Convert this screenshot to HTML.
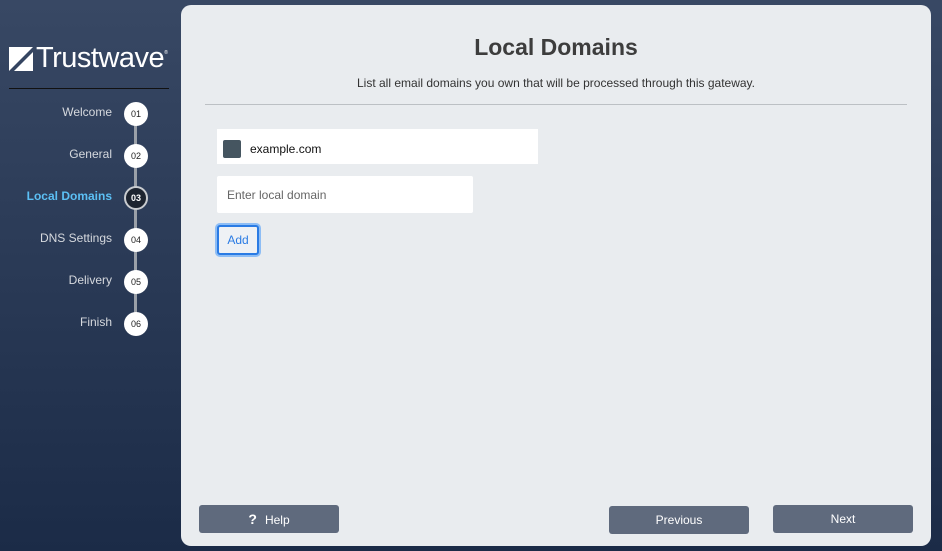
<!DOCTYPE html>
<html><head><meta charset="utf-8"><style>
*{box-sizing:border-box;margin:0;padding:0}
body{width:942px;height:551px;overflow:hidden;background:linear-gradient(#384864,#1b2b47);font-family:"Liberation Sans",sans-serif;position:relative}
.logo{position:absolute;left:9px;top:42px;color:#fff;font-size:29px;letter-spacing:-0.5px;display:flex;align-items:center}
.logo svg{margin-right:3px}
.hr{position:absolute;left:9px;top:88px;width:160px;height:1px;background:#111}
.line{position:absolute;left:134px;top:113px;width:3px;height:210px;background:#9aa0a8}
.step{position:absolute;left:0;width:150px;height:24px}
.step span{position:absolute;right:38px;top:3px;font-size:12px;color:#d6d9de;white-space:nowrap}
.step b{position:absolute;left:124px;top:0;width:24px;height:24px;border-radius:50%;background:#fff;color:#222;font-size:9px;font-weight:normal;text-align:center;line-height:25px}
.step.a span{color:#5cc0f5;font-weight:bold}
.step.a b{background:#1d2430;color:#fff;border:2px solid #c9ccd0;font-weight:bold;line-height:21px}
.panel{position:absolute;left:181px;top:5px;width:750px;height:541px;background:#e9ecef;border-radius:10px}
h1{position:absolute;top:29px;left:0;width:100%;text-align:center;font-size:23px;color:#3d3d3d}
.sub{position:absolute;top:71px;width:100%;text-align:center;font-size:12px;color:#333}
.sep{position:absolute;left:24px;top:99px;width:702px;height:1px;background:#bcc0c4}
.dom{position:absolute;left:36px;top:124px;width:321px;height:35px;background:#fff}
.dom i{position:absolute;left:6px;top:11px;width:18px;height:18px;background:#455560;border-radius:2px}
.dom span{position:absolute;left:33px;top:13px;font-size:12px;color:#111}
.inp{position:absolute;left:36px;top:171px;width:256px;height:37px;background:#fff;border-radius:2px;font-size:12px;color:#666;padding:12px 10px}
.add{position:absolute;left:36px;top:220px;width:42px;height:30px;border:2px solid #2a7be4;border-radius:3px;box-shadow:0 0 0 2px #8dbdf5;background:#eef1f5;color:#2a7be4;font-size:12px;text-align:center;line-height:26px}
.btn{position:absolute;width:140px;height:28px;background:#5f6a7d;border-radius:3px;color:#fff;font-size:12px;text-align:center;line-height:28px}
</style></head><body>
<div class="logo"><svg width="24" height="24" viewBox="0 0 24 24"><path d="M0 0H24L0 24Z M5 24L24 5V24Z" fill="#fff"/></svg>Trustwave<sup style="font-size:5px;align-self:flex-start;margin-top:8px">®</sup></div>
<div class="hr"></div>
<div class="line"></div>
<div class="step" style="top:102px"><span>Welcome</span><b>01</b></div>
<div class="step" style="top:144px"><span>General</span><b>02</b></div>
<div class="step a" style="top:186px"><span>Local Domains</span><b>03</b></div>
<div class="step" style="top:228px"><span>DNS Settings</span><b>04</b></div>
<div class="step" style="top:270px"><span>Delivery</span><b>05</b></div>
<div class="step" style="top:312px"><span>Finish</span><b>06</b></div>
<div class="panel">
<h1>Local Domains</h1>
<div class="sub">List all email domains you own that will be processed through this gateway.</div>
<div class="sep"></div>
<div class="dom"><i></i><span>example.com</span></div>
<div class="inp">Enter local domain</div>
<div class="add">Add</div>
<div class="btn" style="left:18px;top:500px"><b style="font-size:14px;margin-right:8px">?</b>Help</div>
<div class="btn" style="left:428px;top:501px">Previous</div>
<div class="btn" style="left:592px;top:500px">Next</div>
</div>
</body></html>
